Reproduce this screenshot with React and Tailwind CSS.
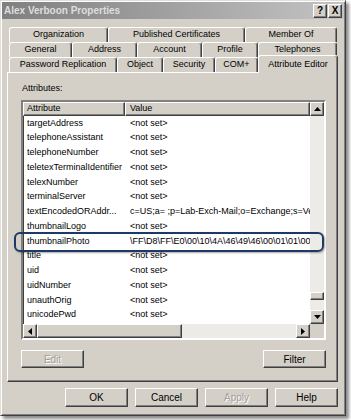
import React from "react";

const raised =
  "border border-t-white border-l-white border-r-[#404040] border-b-[#404040] shadow-[inset_-1px_-1px_0_#808080] bg-[#d4d0c8]";

const rows = [
  ["targetAddress", "<not set>"],
  ["telephoneAssistant", "<not set>"],
  ["telephoneNumber", "<not set>"],
  ["teletexTerminalIdentifier", "<not set>"],
  ["telexNumber", "<not set>"],
  ["terminalServer", "<not set>"],
  ["textEncodedORAddr...", "c=US;a= ;p=Lab-Exch-Mail;o=Exchange;s=Verboon;g=Alex;"],
  ["thumbnailLogo", "<not set>"],
  ["thumbnailPhoto", "\\FF\\D8\\FF\\E0\\00\\10\\4A\\46\\49\\46\\00\\01\\01\\00\\00"],
  ["title", "<not set>"],
  ["uid", "<not set>"],
  ["uidNumber", "<not set>"],
  ["unauthOrig", "<not set>"],
  ["unicodePwd", "<not set>"],
  ["unixHomeDirectory", "<not set>"],
];

const tabRows = [
  [["Organization", 99], ["Published Certificates", 137], ["Member Of", 92]],
  [["General", 63], ["Address", 65], ["Account", 65], ["Profile", 56], ["Telephones", 79]],
  [["Password Replication", 108], ["Object", 46], ["Security", 52], ["COM+", 43]],
];

const Arrow = ({dir}) => {
  const pts = {
    up: "0,4 7,4 3.5,0",
    down: "0,0 7,0 3.5,4",
    left: "4,0 4,7 0,3.5",
    right: "0,0 0,7 4,3.5",
  }[dir];
  const vertical = dir === "up" || dir === "down";
  return (
    <svg width={vertical ? 7 : 4} height={vertical ? 4 : 7} viewBox={vertical ? "0 0 7 4" : "0 0 4 7"}>
      <polygon points={pts} fill="#000"/>
    </svg>
  );
};

const Tab = ({label, width}) => (
  <div
    className="h-[15px] flex items-center justify-center border-t border-l border-r border-t-white border-l-white border-r-[#404040] rounded-t-[3px] shadow-[inset_-1px_0_0_#808080] whitespace-nowrap"
    style={{width}}
  >
    {label}
  </div>
);

const Button = ({children, disabled, w = "w-[63px]", h = "h-[19px]"}) => (
  <div className={`${w} ${h} ${raised} flex items-center justify-center text-[10px] ${disabled ? "text-[#a19f9a] [text-shadow:1px_1px_0_#ffffff]" : "text-black"}`}>
    {children}
  </div>
);

export default function App() {
  return (
    <div className="relative w-[351px] h-[420px] bg-white font-['Liberation_Sans',Arial,sans-serif] text-[9px] text-black">
      <div className="w-[346px] h-[416px] bg-[#d4d0c8] p-[1px] border border-t-[#e0ded8] border-l-[#e0ded8] border-r-[#404040] border-b-[#404040] shadow-[inset_1px_1px_0_#ffffff,inset_-1px_-1px_0_#808080,3px_3px_3px_rgba(0,0,0,0.45)] flex flex-col">
        {/* title bar */}
        <div className="h-[17px] bg-gradient-to-r from-[#808080] to-[#c4c4c4] flex items-center justify-between pl-[2px] pr-[2px]">
          <span className="font-bold text-[10px] text-[#dedede]">Alex Verboon Properties</span>
          <div className="flex gap-[1px]">
            <div className={`${raised} w-[14px] h-[14px] flex items-center justify-center font-bold text-[10px] leading-none`}>?</div>
            <div className={`${raised} w-[14px] h-[14px] flex items-center justify-center font-bold text-[10px] leading-none`}>X</div>
          </div>
        </div>

        <div className="px-[5px] mt-[8px]">
          {/* tabs */}
          <div className="ml-[2px] flex flex-col">
            <div className="flex">
              {tabRows[0].map(([l, w]) => <Tab key={l} label={l} width={w}/>)}
            </div>
            <div className="flex">
              {tabRows[1].map(([l, w]) => <Tab key={l} label={l} width={w}/>)}
            </div>
            <div className="flex items-end h-[15px]">
              {tabRows[2].map(([l, w]) => <Tab key={l} label={l} width={w}/>)}
              <div className="relative z-10 -mb-[1px] h-[18px] w-[80px] flex items-start justify-center pt-[2px] bg-[#d4d0c8] border-t border-l border-r border-t-white border-l-white border-r-[#404040] rounded-t-[3px] shadow-[inset_-1px_0_0_#808080] whitespace-nowrap">
                Attribute Editor
              </div>
            </div>
          </div>

          {/* panel */}
          <div className={`${raised} w-[331px] h-[310px] pt-[10px] px-[13px] flex flex-col`}>
            <div className="h-[11px] leading-[11px] pl-[1px]">Attributes:</div>
            <div className="mt-[6px] w-[305px] h-[240px] border-2 border-t-[#808080] border-l-[#808080] border-r-white border-b-white shadow-[inset_1px_1px_0_#404040] bg-white flex flex-col">
              <div className="flex h-[222px]">
                <div className="flex-1 overflow-hidden">
                  <div className="flex h-[14px]">
                    <div className={`${raised} w-[102px] pl-[3px] flex items-center`}>Attribute</div>
                    <div className={`${raised} flex-1 pl-[4px] flex items-center`}>Value</div>
                  </div>
                  {rows.map(([a, v]) => (
                    <div key={a} className="flex h-[14.75px] items-center whitespace-nowrap">
                      <div className="w-[102px] pl-[4px] overflow-hidden">{a}</div>
                      <div className="flex-1 pl-[5px] overflow-hidden">{v}</div>
                    </div>
                  ))}
                </div>
                {/* vertical scrollbar */}
                <div className="w-[14px] flex flex-col bg-[#ecebe8]">
                  <div className={`${raised} h-[14px] flex items-center justify-center`}><Arrow dir="up"/></div>
                  <div className="flex-1 flex flex-col justify-end pb-[10px]">
                    <div className={`${raised} h-[8px]`}/>
                  </div>
                  <div className={`${raised} h-[14px] flex items-center justify-center`}><Arrow dir="down"/></div>
                </div>
              </div>
              {/* horizontal scrollbar */}
              <div className="flex h-[14px] bg-[#ecebe8]">
                <div className={`${raised} w-[14px] flex items-center justify-center`}><Arrow dir="left"/></div>
                <div className={`${raised} w-[145px]`}/>
                <div className="flex-1"/>
                <div className={`${raised} w-[14px] flex items-center justify-center`}><Arrow dir="right"/></div>
                <div className="w-[14px] bg-[#d4d0c8]"/>
              </div>
            </div>
            <div className="mt-[10px] w-[305px] flex justify-between">
              <Button disabled h="h-[18px]">Edit</Button>
              <Button h="h-[18px]">Filter</Button>
            </div>
          </div>

          {/* dialog buttons */}
          <div className="mt-[6px] w-[331px] flex justify-end gap-[7px]">
            <Button>OK</Button>
            <Button>Cancel</Button>
            <Button disabled>Apply</Button>
            <Button>Help</Button>
          </div>
        </div>
      </div>

      {/* annotation highlight */}
      <div className="absolute left-[14px] top-[232px] w-[310px] h-[20px] border-[2.5px] border-[#1d3a63] rounded-[6px] shadow-[1px_1px_2px_rgba(0,0,0,0.35)]"/>
    </div>
  );
}
